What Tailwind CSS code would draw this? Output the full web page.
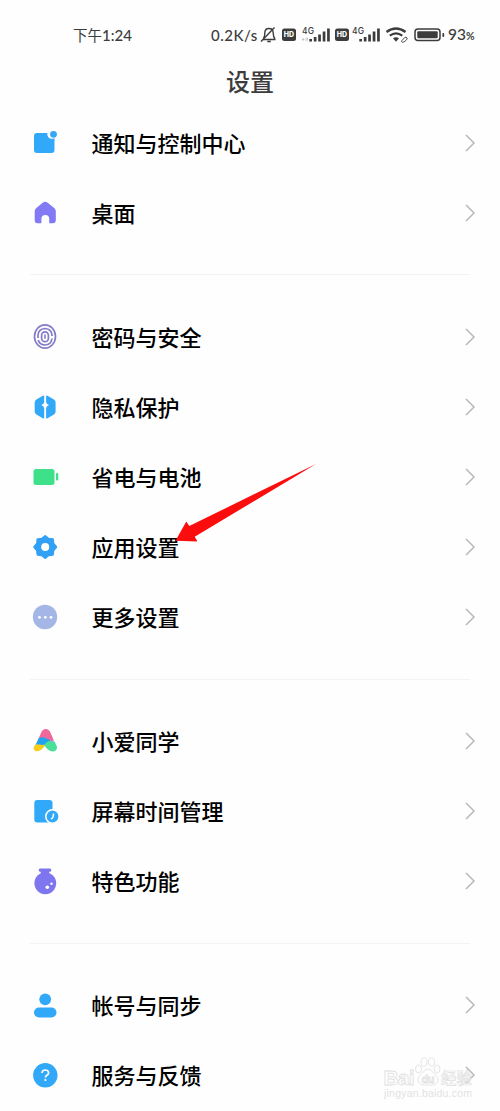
<!DOCTYPE html>
<html lang="zh-CN">
<head>
<meta charset="utf-8">
<title>设置</title>
<script src="https://cdn.jsdelivr.net/npm/@tailwindcss/browser@4"></script>
</head>
<body class="bg-[#fefefe] font-['Noto_Sans_CJK_SC',sans-serif]">
<div class="relative w-[500px] h-[1111px] overflow-hidden bg-[#fefefe] flex flex-col">
  <header class="h-[108px] shrink-0 text-[#3c3c3c]">
    <div class="flex items-center h-[54px] pt-4 pl-[73px]">
      <span class="w-[138px] text-[14.500px] leading-none whitespace-nowrap">下午<span class="font-['Lato','Noto_Sans_CJK_SC'] text-[15px] font-medium">1:24</span></span>
      <span class="w-[48px] font-['Lato',sans-serif] text-[15px] font-medium tracking-[0.5px] leading-none whitespace-nowrap">0.2K/s</span>
      <svg class="shrink-0" width="190" height="24" viewBox="259 23 190 24" fill="none" stroke="#3c3c3c">
        <path d="M263 39.5h12.5M263.500 38.500q1.300-1.500 1.300-5.500 0-4.500 4.200-4.500 4.200 0 4.200 4.500 0 4 1.800 6M267.300 41.500h3.500" stroke-width="1.400"/>
        <path d="M261 41.500L274.500 27.500" stroke-width="1.400"/>
        <g stroke="none" fill="#3c3c3c">
          <rect x="282" y="28.500" width="14" height="12.500" rx="2.500"/>
          <rect x="335" y="28.500" width="14" height="12.500" rx="2.500"/>
          <g fill="#fefefe" font-family="Inter" font-size="7" font-weight="800" text-anchor="middle"><text x="289" y="37.300">HD</text><text x="342" y="37.300">HD</text></g>
          <g font-family="Inter" font-size="8.500" font-weight="500"><text x="302" y="33.500" textLength="12">4G</text><text x="352" y="33.500" textLength="12">4G</text></g>
          <path d="M309.300 39h2.700v2.500h-2.700zM313.800 37h2.700v4.500h-2.700zM318.200 34.500h2.700v7h-2.700zM322.700 31.500h2.700v10h-2.700zM327.100 28.500h2.700v13h-2.700z"/>
          <path d="M359.300 39h2.700v2.500h-2.700zM363.800 37h2.700v4.500h-2.700zM368.200 34.500h2.700v7h-2.700zM372.700 31.500h2.700v10h-2.700zM377.100 28.500h2.700v13h-2.700z"/>
          <path d="M393 38.300q3-2.200 6 0L396 41.800z"/>
          <rect x="417.300" y="31.200" width="20.400" height="7" rx="1"/>
          <rect x="442.400" y="33" width="1.800" height="4" rx=".8"/>
        </g>
        <path d="M302 39.500h2.500m-1.500-1.500v3M306 37.500v3.500m1.500-3.500v3" stroke="#bbb" stroke-width=".8"/>
        <path d="M386.500 32q9.500-7 19 0M389.800 35.700q6.200-4.700 12.500 0" stroke-width="2.200"/>
        <path d="M402 40.500l2.500-2.800q1.500-1 2.500.2.500 1-.5 2l-2.500 2q-1.500 1-2.300 0-.5-.6.300-1.400z" stroke-width=".9"/>
        <rect x="415" y="29" width="25" height="11.500" rx="3" stroke-width="1.500"/>
      </svg>
      <span class="-ml-px font-['Lato',sans-serif] text-[15.500px] font-medium leading-none">93<span class="text-[10.500px] font-bold">%</span></span>
    </div>
    <h1 class="text-center text-[24px] leading-[54px] font-medium h-[54px]">设置</h1>
  </header>

  <main class="text-[22px] font-medium text-black leading-none">
    <section>
      <div class="h-[70px] flex items-center pl-[30px] pr-6">
        <svg class="mr-[31.500px] shrink-0" width="30" height="30" viewBox="0 0 30 30" fill="#32a8f8"><path d="M7 5h10.500a4.600 4.600 0 0 0 7 5v12q0 3-3 3H7q-3 0-3-3V8q0-3 3-3z"/><circle cx="23.500" cy="6.300" r="3.400"/></svg>
        <span class="flex-1 pb-0.5">通知与控制中心</span>
        <svg width="12" height="18" fill="none" stroke="#b8b8b8" stroke-width="1.500"><path d="M2 1l8 8-8 8"/></svg>
      </div>
      <div class="h-[70px] flex items-center pl-[30px] pr-6">
        <svg class="mr-[31.500px] shrink-0" width="30" height="30" viewBox="0 0 30 30" fill="#827af5"><path d="M12.700 4.800q2.500-1.900 5 0l6.500 5.200q1.600 1.300 1.600 3.300V22q0 3.200-3 3.200H19.200v-4.200a3.900 3.900 0 0 0-7.800 0v4.200h-3.900q-2.800 0-2.800-3.200v-8.700q0-2 1.600-3.300z"/></svg>
        <span class="flex-1 pb-0.5">桌面</span>
        <svg width="12" height="18" fill="none" stroke="#b8b8b8" stroke-width="1.500"><path d="M2 1l8 8-8 8"/></svg>
      </div>
    </section>
    <div class="h-[54px] px-[30px] pt-[26px]"><div class="h-px bg-[#f3f3f3]"></div></div>
    <section>
      <div class="h-[70px] flex items-center pl-[30px] pr-6">
        <svg class="mr-[31.500px] shrink-0" width="30" height="30" viewBox="0 0 30 30" fill="none" stroke="#837cca" stroke-width="1.700"><ellipse cx="15" cy="14.500" rx="10.500" ry="11.700"/><path d="M8 16v-3q.5-6 7-6.500 6.500.5 7 6.500v1M22 16.500q-.8 6.200-7 6.500-5.500-.3-6.800-5"/><rect x="11.600" y="9.800" width="6.800" height="9.800" rx="3.400"/><path d="M15 12.500v4.300" stroke-width="1.600"/></svg>
        <span class="flex-1 pb-0.5">密码与安全</span>
        <svg width="12" height="18" fill="none" stroke="#b8b8b8" stroke-width="1.500"><path d="M2 1l8 8-8 8"/></svg>
      </div>
      <div class="h-[70px] flex items-center pl-[30px] pr-6">
        <svg class="mr-[31.500px] shrink-0" width="30" height="30" viewBox="0 0 30 30" fill="#32a8f8"><path d="M14.200 3.500v6.400q-.4 2.500-3 3.100 2.600.8 3 3.200v10.300q-.8 0-1.900-.5l-5.900-3.500q-1.700-1-1.700-3v-9q0-2 1.700-3l5.900-3.500q.8-.5 1.900-.5zM16.100 3.500v6.400q.4 2.500 3 3.100-2.600.8-3 3.200v10.300q.8 0 1.900-.5l5.900-3.500q1.700-1 1.700-3v-9q0-2-1.700-3L18 4q-.8-.5-1.900-.5z"/></svg>
        <span class="flex-1 pb-0.5">隐私保护</span>
        <svg width="12" height="18" fill="none" stroke="#b8b8b8" stroke-width="1.500"><path d="M2 1l8 8-8 8"/></svg>
      </div>
      <div class="h-[70px] flex items-center pl-[30px] pr-6">
        <svg class="mr-[31.500px] shrink-0" width="30" height="30" viewBox="0 0 30 30" fill="#3fe08a"><rect x="3.500" y="7" width="21" height="16" rx="2.500"/><rect x="26" y="11" width="2.300" height="7.500" rx="1"/></svg>
        <span class="flex-1 pb-0.5">省电与电池</span>
        <svg width="12" height="18" fill="none" stroke="#b8b8b8" stroke-width="1.500"><path d="M2 1l8 8-8 8"/></svg>
      </div>
      <div class="h-[70px] flex items-center pl-[30px] pr-6">
        <svg class="mr-[31.500px] shrink-0" width="30" height="30" viewBox="0 0 30 30"><path d="M15.200 4L18.600 6.800 22.900 7.300 23.400 11.600 26.200 15 23.400 18.400 22.900 22.700 18.600 23.200 15.200 26 11.800 23.200 7.500 22.700 7 18.400 4.200 15 7 11.600 7.500 7.300 11.800 6.800z" fill="#32a0f5" stroke="#32a0f5" stroke-width="2" stroke-linejoin="round"/><circle cx="15.200" cy="15" r="4" fill="#fefefe"/></svg>
        <span class="flex-1 pb-0.5">应用设置</span>
        <svg width="12" height="18" fill="none" stroke="#b8b8b8" stroke-width="1.500"><path d="M2 1l8 8-8 8"/></svg>
      </div>
      <div class="h-[70px] flex items-center pl-[30px] pr-6">
        <svg class="mr-[31.500px] shrink-0" width="30" height="30" viewBox="0 0 30 30"><circle cx="15" cy="15" r="12.200" fill="#a3b6e6"/><g fill="#fefefe"><circle cx="9.500" cy="15.300" r="1.400"/><circle cx="15.300" cy="15.300" r="1.400"/><circle cx="21" cy="15.300" r="1.400"/></g></svg>
        <span class="flex-1 pb-0.5">更多设置</span>
        <svg width="12" height="18" fill="none" stroke="#b8b8b8" stroke-width="1.500"><path d="M2 1l8 8-8 8"/></svg>
      </div>
    </section>
    <div class="h-[54px] px-[30px] pt-[27px]"><div class="h-px bg-[#f3f3f3]"></div></div>
    <section>
      <div class="h-[70px] flex items-center pl-[30px] pr-6">
        <svg class="mr-[31.500px] shrink-0" width="30" height="30" viewBox="0 0 30 30"><path d="M8.500 13l2.700-6.500Q12.600 3 15.800 3t4.600 3.500L24 15q-8 0-15.500-2z" fill="#f0679b"/><path d="M5.500 19l3.300-7q4.500-2 8.500.8 4 2.900 8 3.200l-3 6-7-3.500q-4 3-9.800.5z" fill="#22a3ec"/><path d="M4.200 20q1.500-2.200 5-1.500 4 1 6.800-.5-3.500 6-7.500 7.100-3.700.7-4.900-2.100-.2-1.500.6-3z" fill="#f6cd1d"/><path d="M14.500 19.500q1.800-4.500 5.500-4.500 3.500 0 5 1.500 2.200 3.500 2 5.500-.7 3.500-4.500 3.500-4.500-.3-8-6z" fill="#4be09a"/></svg>
        <span class="flex-1 pb-0.5">小爱同学</span>
        <svg width="12" height="18" fill="none" stroke="#b8b8b8" stroke-width="1.500"><path d="M2 1l8 8-8 8"/></svg>
      </div>
      <div class="h-[70px] flex items-center pl-[30px] pr-6">
        <svg class="mr-[31.500px] shrink-0" width="30" height="30" viewBox="0 0 30 30"><rect x="4.300" y="4" width="18.200" height="22.500" rx="3" fill="#32a8f8"/><circle cx="22.500" cy="20.500" r="6.700" fill="#32a8f8" stroke="#fefefe" stroke-width="1.600"/><path d="M23.500 17.500q.3 4-2.500 5.700" fill="none" stroke="#fefefe" stroke-width="1.400"/></svg>
        <span class="flex-1 pb-0.5">屏幕时间管理</span>
        <svg width="12" height="18" fill="none" stroke="#b8b8b8" stroke-width="1.500"><path d="M2 1l8 8-8 8"/></svg>
      </div>
      <div class="h-[70px] flex items-center pl-[30px] pr-6">
        <svg class="mr-[31.500px] shrink-0" width="30" height="30" viewBox="0 0 30 30" fill="#7e76ee"><path d="M10 2.500h10q1.300 0 1.300 1.600T20 5.700h-.7q-.8 2 1 2.700H9.700q1.800-.7 1-2.700H10q-1.300 0-1.300-1.600T10 2.500z"/><circle cx="15.300" cy="17.300" r="10.900"/><g fill="#fefefe"><circle cx="17.300" cy="21.300" r="1.800"/><circle cx="21.500" cy="17.800" r="1.200"/></g></svg>
        <span class="flex-1 pb-0.5">特色功能</span>
        <svg width="12" height="18" fill="none" stroke="#b8b8b8" stroke-width="1.500"><path d="M2 1l8 8-8 8"/></svg>
      </div>
    </section>
    <div class="h-[54px] px-[30px] pt-[27px]"><div class="h-px bg-[#f3f3f3]"></div></div>
    <section>
      <div class="h-[70px] flex items-center pl-[30px] pr-6">
        <svg class="mr-[31.500px] shrink-0" width="30" height="30" viewBox="0 0 30 30" fill="#32a8f8"><circle cx="15.200" cy="9.300" r="5.900"/><rect x="4" y="17.500" width="22.500" height="10" rx="5"/></svg>
        <span class="flex-1 pb-0.5">帐号与同步</span>
        <svg width="12" height="18" fill="none" stroke="#b8b8b8" stroke-width="1.500"><path d="M2 1l8 8-8 8"/></svg>
      </div>
      <div class="h-[70px] flex items-center pl-[30px] pr-6">
        <svg class="mr-[31.500px] shrink-0" width="30" height="30" viewBox="0 0 30 30"><circle cx="15.300" cy="15.300" r="12.200" fill="#32a8f8"/><path d="M12 13q.1-3 3.300-3t3.300 2.700q0 1.600-1.700 2.600-1.500.9-1.500 2.200" fill="none" stroke="#fefefe" stroke-width="1.700"/><circle cx="15.400" cy="20" r="1.100" fill="#fefefe"/></svg>
        <span class="flex-1 pb-0.5">服务与反馈</span>
        <svg width="12" height="18" fill="none" stroke="#b8b8b8" stroke-width="1.500"><path d="M2 1l8 8-8 8"/></svg>
      </div>
    </section>
  </main>

  <!-- pointer to the app settings row -->
  <svg class="absolute left-[170px] top-[460px]" width="150" height="86" viewBox="170 460 150 86"><path d="M316 464L189.300 526 186.300 521.500 175.500 540.800 197.500 541.500 194.700 536.700z" fill="#fb0d0d"/></svg>

  <!-- watermark -->
  <svg class="absolute left-[380px] top-[1050px]" width="100" height="55" viewBox="380 1050 100 55" fill="#fefefe" stroke="#dedede" stroke-width=".8">
    <text x="383.500" y="1085" font-family="Liberation Sans" font-weight="700" font-size="21" textLength="31">Bai</text>
    <ellipse cx="418.500" cy="1069" rx="3" ry="4"/><ellipse cx="424" cy="1062" rx="3" ry="4.300"/><ellipse cx="431.500" cy="1062" rx="3" ry="4.300"/><ellipse cx="437" cy="1069" rx="3" ry="4"/>
    <path d="M428 1069q3 0 5.500 4 6 5 4 9-2 4-9.500 3-7.500 1-9.500-3-2-4 4-9 2.500-4 5.500-4z"/>
    <text x="421.500" y="1083" font-family="Liberation Sans" font-weight="700" font-size="11" textLength="13">du</text>
    <text x="441" y="1083.500" font-family="Noto Sans CJK SC" font-weight="500" font-size="15.500" textLength="31" stroke-width=".7">经验</text>
    <text x="384" y="1097" font-family="Liberation Sans" font-size="10.500" textLength="88" fill="#e2e2e2" stroke="none">jingyan.baidu.com</text>
  </svg>
</div>
</body>
</html>
